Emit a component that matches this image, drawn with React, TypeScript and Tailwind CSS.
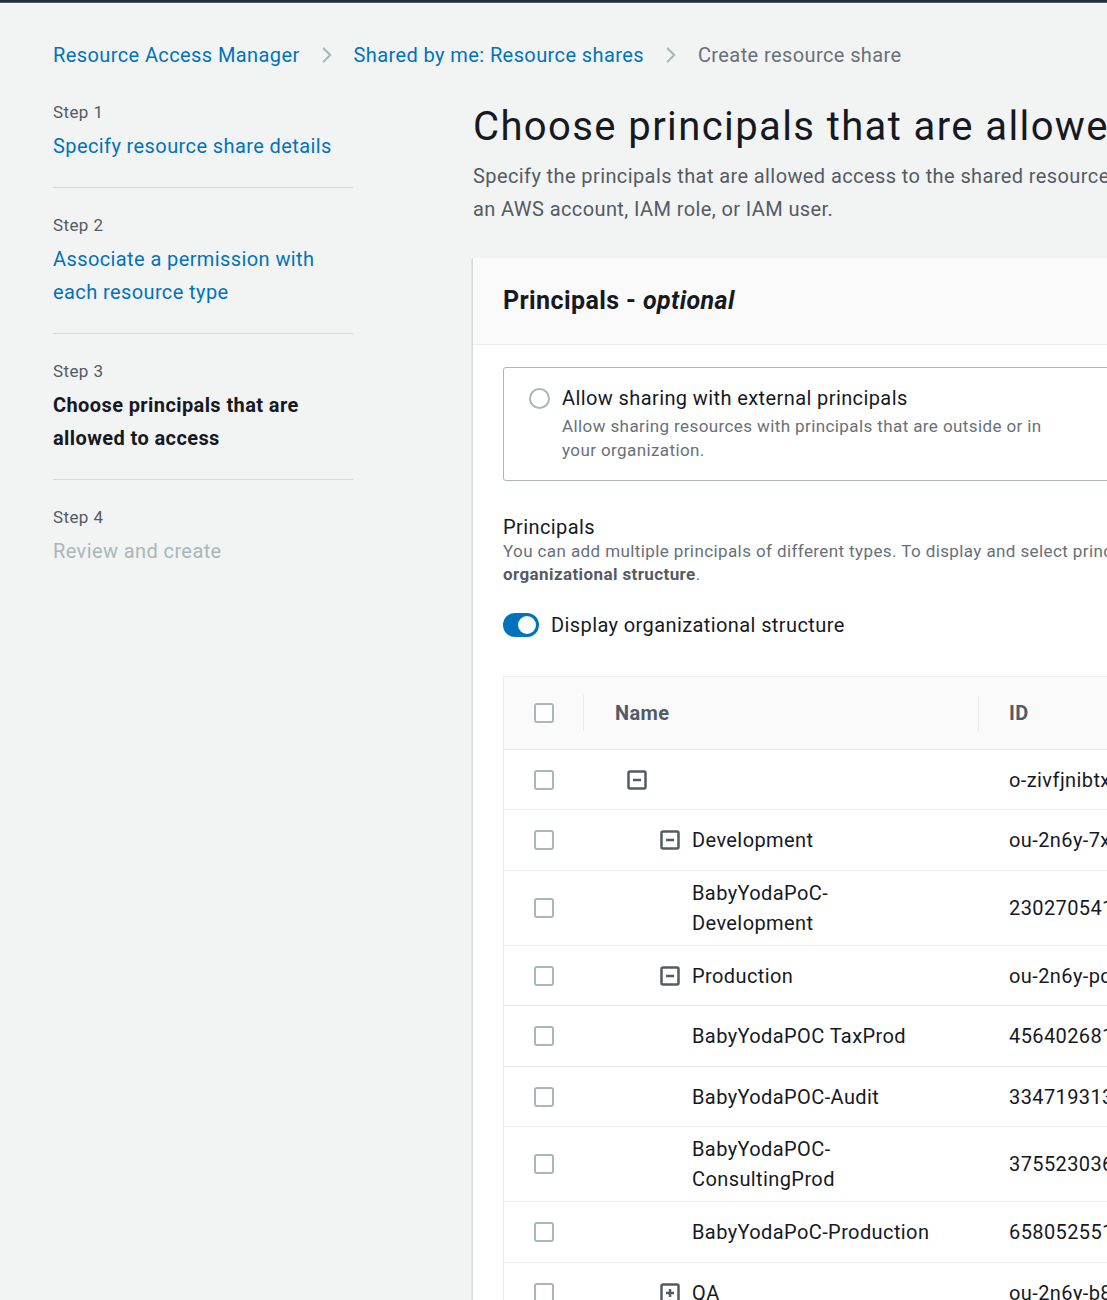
import { ChevronRight } from "lucide-react";

const ROWS = [
  { level: 0, icon: "minus", name: "", id: "o-zivfjnibtx", h: "h-[60px]" },
  { level: 1, icon: "minus", name: "Development", id: "ou-2n6y-7xk1qz0b", h: "h-[61px]" },
  { level: 2, icon: null, name: "BabyYodaPoC-\nDevelopment", id: "230270541187", h: "h-[75px]" },
  { level: 1, icon: "minus", name: "Production", id: "ou-2n6y-pq4ttv2k", h: "h-[60px]" },
  { level: 2, icon: null, name: "BabyYodaPOC TaxProd", id: "456402681193", h: "h-[61px]" },
  { level: 2, icon: null, name: "BabyYodaPOC-Audit", id: "334719313470", h: "h-[60px]" },
  { level: 2, icon: null, name: "BabyYodaPOC-\nConsultingProd", id: "375523036421", h: "h-[75px]" },
  { level: 2, icon: null, name: "BabyYodaPoC-Production", id: "658052551292", h: "h-[61px]" },
  { level: 1, icon: "plus", name: "QA", id: "ou-2n6y-b8d3vn1w", h: "h-[60px]" },
];

const STEPS = [
  { n: 1, label: "Specify resource share details", state: "link" },
  { n: 2, label: "Associate a permission with each resource type", state: "link" },
  { n: 3, label: "Choose principals that are allowed to access", state: "active" },
  { n: 4, label: "Review and create", state: "disabled" },
];

function Checkbox() {
  return <div className="w-[20px] h-[20px] rounded-[3px] border-2 border-[#aab7b8] bg-white" />;
}

function TreeIcon({ kind }: { kind: string }) {
  return (
    <svg width="20" height="20" viewBox="0 0 20 20" className="shrink-0">
      <rect x="1.5" y="1.5" width="17" height="17" rx="1.5" fill="none" stroke="#545b64" strokeWidth="2.5" />
      <line x1="6" y1="10" x2="14" y2="10" stroke="#545b64" strokeWidth="2.5" />
      {kind === "plus" && <line x1="10" y1="6" x2="10" y2="14" stroke="#545b64" strokeWidth="2.5" />}
    </svg>
  );
}

export default function App() {
  return (
    <div
      className="min-h-[1300px] bg-[#f2f3f3] overflow-hidden tracking-[0.025em]"
      style={{ fontFamily: "Roboto, 'Liberation Sans', sans-serif" }}
    >
      <div className="h-[3px] bg-[#232f3e] border-b border-[#545b64]" />

      {/* breadcrumb */}
      <nav className="flex items-center pl-[53px] pt-[33px] h-[70px] text-[20px] whitespace-nowrap">
        <span className="text-[#0073bb]">Resource Access Manager</span>
        <ChevronRight className="w-[26px] h-[26px] text-[#aab7b8] mx-[14px]" strokeWidth={2} />
        <span className="text-[#0073bb]">Shared by me: Resource shares</span>
        <ChevronRight className="w-[26px] h-[26px] text-[#aab7b8] mx-[14px]" strokeWidth={2} />
        <span className="text-[#687078]">Create resource share</span>
      </nav>

      <div className="flex">
        {/* steps */}
        <aside className="w-[300px] ml-[53px] shrink-0 pt-[27px]">
          {STEPS.map((s, i) => (
            <div key={s.n} className={i < STEPS.length - 1 ? "border-b border-[#d5dbdb] pb-[24px] mb-[25px]" : ""}>
              <div className="text-[17px] text-[#545b64] leading-[24px] mb-[6px]">Step {s.n}</div>
              <div
                className={
                  "text-[20px] leading-[33px] " +
                  (s.state === "link"
                    ? "text-[#0073bb]"
                    : s.state === "active"
                    ? "text-[#16191f] font-bold"
                    : "text-[#aab7b8]")
                }
              >
                {s.label}
              </div>
            </div>
          ))}
        </aside>

        {/* main */}
        <main className="ml-[119px] w-[900px] shrink-0">
          <h1 className="text-[40px] leading-[48px] text-[#16191f] pt-[30px] pl-[1px] whitespace-nowrap tracking-[0.035em]">
            Choose principals that are allowed to access
          </h1>
          <p className="text-[20px] leading-[33px] text-[#545b64] mt-[9px] pl-[1px] whitespace-nowrap">
            Specify the principals that are allowed access to the shared resources. A principal can be
            <br />
            an AWS account, IAM role, or IAM user.
          </p>

          <section className="mt-[32px] bg-white border-l border-[#d5dbdb] shadow-[0_1px_1px_rgba(0,28,36,0.3)]">
            <header className="h-[87px] bg-[#fafafa] border-b border-[#eaeded] flex items-center px-[30px]">
              <h2 className="text-[25px] font-bold text-[#16191f]">
                Principals - <i className="font-bold">optional</i>
              </h2>
            </header>

            <div className="pl-[30px] pt-[22px]">
              <div className="border border-[#aab7b8] rounded-[3px] h-[114px] flex pl-[25px] pt-[17px]">
                <div className="w-[21px] h-[21px] rounded-full border-2 border-[#aab7b8] mt-[3px] shrink-0" />
                <div className="ml-[12px]">
                  <div className="text-[20px] leading-[26px] text-[#16191f]">Allow sharing with external principals</div>
                  <div className="text-[17px] leading-[24px] text-[#687078] mt-[3px] w-[500px]">
                    Allow sharing resources with principals that are outside or in your organization.
                  </div>
                </div>
              </div>

              <div className="mt-[33px] text-[20px] leading-[26px] text-[#16191f]">Principals</div>
              <div className="text-[17px] leading-[23px] text-[#687078] whitespace-nowrap">
                You can add multiple principals of different types. To display and select principals in your organization, choose Display
              </div>
              <div className="text-[17px] leading-[23px] text-[#687078]">
                <b className="text-[#545b64]">organizational structure</b>.
              </div>

              <div className="flex items-center mt-[24px]">
                <div className="w-[36px] h-[24px] rounded-full bg-[#0073bb] flex items-center justify-end pr-[3px]">
                  <div className="w-[18px] h-[18px] rounded-full bg-white" />
                </div>
                <span className="ml-[12px] text-[20px] text-[#16191f]">Display organizational structure</span>
              </div>

              {/* table */}
              <div className="mt-[36px] border border-[#eaeded] border-r-0">
                <div className="h-[73px] bg-[#fafafa] border-b border-[#eaeded] flex items-center">
                  <div className="w-[79px] flex justify-center">
                    <Checkbox />
                  </div>
                  <div className="w-[1px] h-[36px] bg-[#eaeded]" />
                  <div className="w-[394px] pl-[31px] text-[20px] font-bold text-[#545b64]">Name</div>
                  <div className="w-[1px] h-[36px] bg-[#eaeded]" />
                  <div className="pl-[30px] text-[20px] font-bold text-[#545b64]">ID</div>
                </div>
                {ROWS.map((r, i) => (
                  <div key={i} className={"flex items-center border-b border-[#eaeded] " + r.h}>
                    <div className="w-[79px] flex justify-center">
                      <Checkbox />
                    </div>
                    <div
                      className={
                        "w-[396px] flex items-center gap-[12px] " +
                        (r.level === 0 ? "pl-[44px]" : "pl-[77px]")
                      }
                    >
                      {r.icon && <TreeIcon kind={r.icon} />}
                      {r.name && (
                        <span
                          className={
                            "text-[20px] leading-[30px] text-[#16191f] whitespace-pre-line " +
                            (r.icon ? "" : "pl-[32px]")
                          }
                        >
                          {r.name}
                        </span>
                      )}
                    </div>
                    <div className="pl-[30px] text-[20px] text-[#16191f] whitespace-nowrap">{r.id}</div>
                  </div>
                ))}
              </div>
            </div>
          </section>
        </main>
      </div>
    </div>
  );
}
